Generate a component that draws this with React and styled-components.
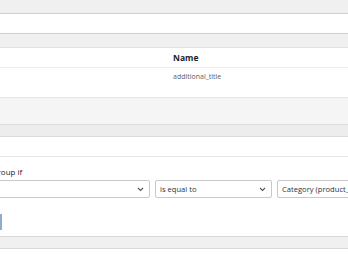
import React from 'react';
import styled, { createGlobalStyle } from 'styled-components';

const Global = createGlobalStyle`
  html, body { margin: 0; padding: 0; background: #fff; overflow: hidden; }
  body { font-family: "Open Sans", "Noto Sans", sans-serif; color: #1d2327; }
`;

const Page = styled.div`
  width: 348px;
  height: 268px;
  overflow: hidden;
`;

// the screenshot is scrolled sideways, so the panel starts left of the viewport
const Canvas = styled.div`
  margin-left: -200px;
  width: 560px;
`;

const Band = styled.div`
  height: ${p => p.h}px;
  background: ${p => p.bg || '#f0f0f0'};
  border-top: ${p => (p.top ? `1px solid ${p.top}` : 'none')};
  border-bottom: ${p => (p.bottom ? `1px solid ${p.bottom}` : 'none')};
`;

const Blank = styled.div`
  height: ${p => p.h}px;
  background: #fff;
`;

const Row = styled.div`
  display: grid;
  grid-template-columns: 373px 1fr;
  align-items: ${p => (p.head ? 'center' : 'start')};
  box-sizing: border-box;
  padding-top: ${p => (p.head ? 0 : 4)}px;
  height: ${p => p.h}px;
  border-bottom: ${p => (p.line ? `1px solid ${p.line}` : 'none')};
  font-size: ${p => (p.head ? '8.5px' : '7px')};
  font-weight: ${p => (p.head ? 700 : 400)};
  color: ${p => (p.head ? '#1d2327' : '#5a5f64')};
`;

const Rules = styled.div`
  padding: 9px 0 0 137px;
  height: 79px;
  box-sizing: border-box;
`;

const Label = styled.div`
  font-size: 8px;
  color: #1d2327;
  height: 12px;
  line-height: 12px;
  margin-bottom: 2px;
`;

const SelectRow = styled.div`
  display: flex;
  gap: 5px;
`;

const Select = styled.div`
  box-sizing: border-box;
  width: ${p => p.w}px;
  height: 18px;
  border: 1px solid #c9c9c9;
  border-radius: 2px;
  display: flex;
  align-items: center;
  justify-content: space-between;
  padding: 0 5px 0 4px;
  font-size: 7.6px;
  color: #2c3338;
  white-space: nowrap;
  overflow: hidden;
  flex-shrink: 0;
`;

const Chevron = () => (
  <svg width="7" height="5" viewBox="0 0 7 5">
    <path d="M1 1 L3.5 3.5 L6 1" fill="none" stroke="#50575e" strokeWidth="1.1" />
  </svg>
);

const Button = styled.div`
  margin-top: 16px;
  width: 65px;
  height: 16px;
  border-right: 2px solid #8eaccd;
  box-sizing: border-box;
`;

export default function App() {
  return (
    <Page>
      <Global />
      <Canvas>
        <Band h={13} bottom="#cfcfcf" />
        <Blank h={19} />
        <Band h={13} top="#cfcfcf" bottom="#e2e2e2" />
        <Row h={20} line="#ececec" head>
          <span />
          <span>Name</span>
        </Row>
        <Row h={29}>
          <span />
          <span>additional_title</span>
        </Row>
        <Band h={26} bg="#f5f5f5" top="#e6e6e6" bottom="#dcdcdc" />
        <Band h={11} bg="#ededed" bottom="#dcdcdc" />
        <Blank h={19} />
        <Band h={0} top="#e6e6e6" />
        <Rules>
          <Label>Show this field group if</Label>
          <SelectRow>
            <Select w={213}>
              <span>Post Type</span>
              <Chevron />
            </Select>
            <Select w={117}>
              <span>is equal to</span>
              <Chevron />
            </Select>
            <Select w={140}>
              <span>Category (product_cat)</span>
              <Chevron />
            </Select>
          </SelectRow>
          <Button />
        </Rules>
        <Band h={11} top="#d9d9d9" bottom="#d9d9d9" />
        <Blank h={20} />
      </Canvas>
    </Page>
  );
}
